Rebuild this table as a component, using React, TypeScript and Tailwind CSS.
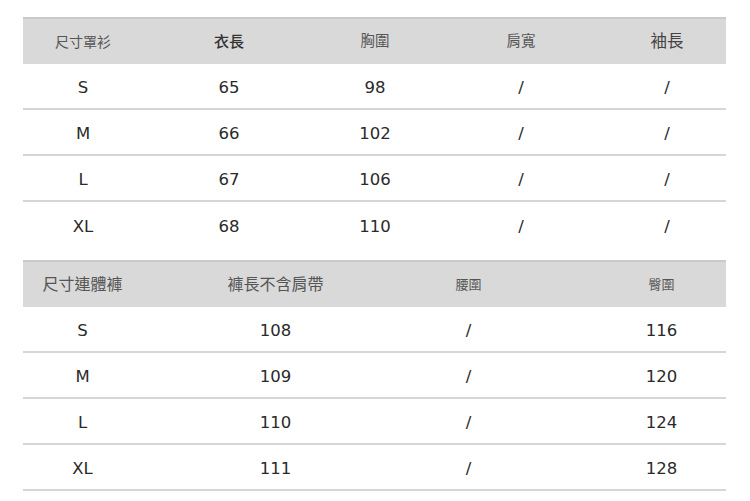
import React from 'react';

const font = { fontFamily: '"Noto Sans CJK TC", "Noto Sans", sans-serif' };
const num = { fontFamily: '"DejaVu Sans", "Noto Sans CJK TC", sans-serif' };

const topRows = [
  ['S', '65', '98', '/', '/'],
  ['M', '66', '102', '/', '/'],
  ['L', '67', '106', '/', '/'],
  ['XL', '68', '110', '/', '/'],
];

const bottomRows = [
  ['S', '108', '/', '116'],
  ['M', '109', '/', '120'],
  ['L', '110', '/', '124'],
  ['XL', '111', '/', '128'],
];

export default function App() {
  return (
    <div className="w-[750px] h-[501px] bg-white overflow-hidden pt-[17px] pl-[23px]" style={font}>
      {/* blouse table */}
      <div className="w-[703px]">
        <div className="h-[47px] bg-[#d9d9d9] border-t-2 border-[#cacaca] flex items-center">
          <div className="flex items-center -ml-[13px] -mt-[2px] text-[#555] leading-none">
            <div className="w-[146px] text-center text-[14px]">尺寸罩衫</div>
            <div className="w-[146px] text-center text-[15px] text-[#333] font-medium">衣長</div>
            <div className="w-[146px] text-center text-[14.5px]">胸圍</div>
            <div className="w-[146px] text-center text-[14.5px]">肩寬</div>
            <div className="w-[146px] text-center text-[16.5px] text-[#444]">袖長</div>
          </div>
        </div>
        {topRows.map((r, i) => (
          <div
            key={i}
            className={`h-[46px] flex items-center ${i < 3 ? 'border-b-2 border-[#d6d6d6]' : ''}`}
          >
            <div className="flex mt-[5px] -ml-[13px] text-[16.5px] text-[#2a2a2a]" style={num}>
              {r.map((c, j) => (
                <div key={j} className="w-[146px] text-center">{c}</div>
              ))}
            </div>
          </div>
        ))}
      </div>

      {/* jumpsuit table */}
      <div className="w-[703px] mt-[12px]">
        <div className="h-[47px] bg-[#d9d9d9] border-t-2 border-[#cacaca] flex items-center">
          <div className="flex items-center -ml-[37px] -mt-[3px] text-[#555] leading-none">
            <div className="w-[193px] text-center text-[16px]">尺寸連體褲</div>
            <div className="w-[193px] text-center text-[16px]">褲長不含肩帶</div>
            <div className="w-[193px] text-center text-[13px]">腰圍</div>
            <div className="w-[193px] text-center text-[13px]">臀圍</div>
          </div>
        </div>
        {bottomRows.map((r, i) => (
          <div key={i} className="h-[46px] flex items-center border-b-2 border-[#d6d6d6]">
            <div className="flex mt-[5px] -ml-[37px] text-[16.5px] text-[#2a2a2a]" style={num}>
              {r.map((c, j) => (
                <div key={j} className="w-[193px] text-center">{c}</div>
              ))}
            </div>
          </div>
        ))}
      </div>
    </div>
  );
}
